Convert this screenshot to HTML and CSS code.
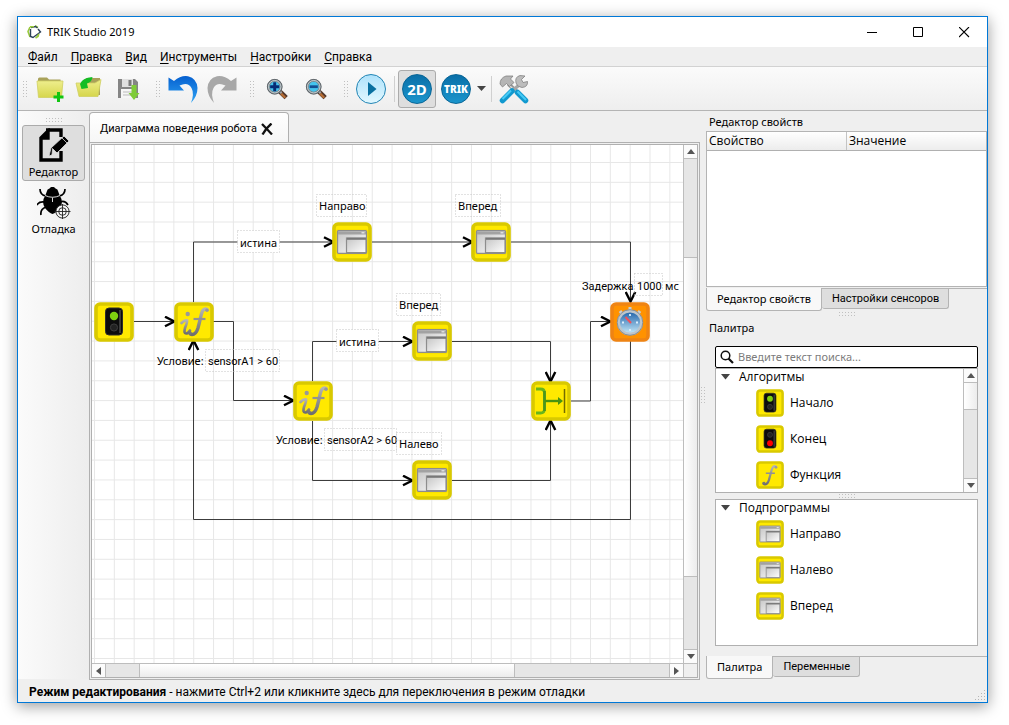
FILE: index.html
```
<!DOCTYPE html>
<html lang="ru">
<head>
<meta charset="utf-8">
<title>TRIK Studio 2019</title>
<link rel="stylesheet" href="styles.css">
</head>
<body>
<svg class="defs" width="0" height="0" aria-hidden="true">
  <defs>
    <linearGradient id="silver" x1="0" y1="0" x2="0" y2="1"><stop offset="0" stop-color="#b4b4b4"/><stop offset="1" stop-color="#6f6f6f"/></linearGradient>
    <linearGradient id="pane" x1="0" y1="0" x2="1" y2="1"><stop offset="0" stop-color="#c4c4c4"/><stop offset="1" stop-color="#ffffff"/></linearGradient>
    <linearGradient id="folder" x1="0" y1="0" x2="0" y2="1"><stop offset="0" stop-color="#eeee8c"/><stop offset="1" stop-color="#d6d64c"/></linearGradient>
    <linearGradient id="dial" x1="0" y1="0" x2="0" y2="1"><stop offset="0" stop-color="#1c5fa8"/><stop offset="1" stop-color="#c9ecfa"/></linearGradient>
    <linearGradient id="blueArrow" x1="0" y1="0" x2="0" y2="1"><stop offset="0" stop-color="#0660d0"/><stop offset="1" stop-color="#2fa4f4"/></linearGradient>
    <linearGradient id="sky" x1="0" y1="0" x2="0" y2="1"><stop offset="0" stop-color="#aee2fb"/><stop offset="1" stop-color="#e2f8ff"/></linearGradient>
    <symbol id="tile" viewBox="0 0 40 40"><rect x="2" y="2" width="36" height="36" rx="4" fill="#ffe900" stroke="#d9c900" stroke-width="3.6"/></symbol>
    <symbol id="light" viewBox="0 0 40 40"><rect x="11.500" y="6" width="17" height="27" rx="3.500" fill="#0c0c0c" stroke="#2d2d2d"/><path d="M26 8v23" stroke="#3b3b3b" stroke-width="2"/></symbol>
    <symbol id="begin" viewBox="0 0 40 40"><use href="#tile"/><use href="#light"/><circle cx="20" cy="14" r="4.200" fill="#7ed010"/><circle cx="20" cy="25.500" r="3.600" fill="#222" stroke="#3d3d3d"/></symbol>
    <symbol id="end" viewBox="0 0 40 40"><use href="#tile"/><use href="#light"/><circle cx="20" cy="14" r="3.600" fill="#222" stroke="#3d3d3d"/><circle cx="20" cy="26" r="4.200" fill="#f00"/></symbol>
    <symbol id="cond" viewBox="0 0 40 40"><use href="#tile"/><g fill="none" stroke="url(#silver)" stroke-linecap="round"><path d="M7.500 21Q10.500 18 13 18.500Q13.500 20 11 26Q9.500 31.500 12 31.500Q14 31.500 16 28.500" stroke-width="2.700"/><path d="M33 7.500Q30.500 6 28.500 9Q27.500 11 26 18L24 26Q22 32.500 18 32.500Q16.500 32.500 16 31.500" stroke-width="3.400"/></g><path d="M19.500 17H31.500" stroke="#929292" stroke-width="2.200"/><circle cx="13.700" cy="12" r="2.200" fill="#999"/><circle cx="33" cy="8.200" r="1.800" fill="#999"/><circle cx="16" cy="31" r="1.800" fill="#777"/></symbol>
    <symbol id="func" viewBox="0 0 40 40"><use href="#tile"/><path d="M29 8.500Q26.500 6 24 9Q22.500 11 21 18L18.500 27Q16.500 33.500 12.500 33.500Q11 33.500 10.500 32" fill="none" stroke="url(#silver)" stroke-linecap="round" stroke-width="3.200"/><path d="M14 17.500H27" stroke="#929292" stroke-width="2.200"/><circle cx="28.500" cy="9" r="1.900" fill="#999"/><circle cx="11.500" cy="31.500" r="1.900" fill="#777"/></symbol>
    <symbol id="sub" viewBox="0 0 40 40"><use href="#tile"/><path d="M5 8h30v24H5z" fill="none" stroke="#f3d900"/><rect x="5.500" y="8.700" width="29" height="22.600" rx="1" fill="url(#pane)" stroke="#8d8d8d" stroke-width="1.300"/><path d="M6 9.500h28v3H6z" fill="#a2a2a2"/><path d="M29.500 10.800h3" stroke="#eee" stroke-width="1.200"/><rect x="14.500" y="16" width="19.500" height="14.600" fill="url(#pane)" stroke="#8d8d8d" stroke-width="1.200"/><path d="M15 16.800h19" stroke="#787878" stroke-width="2"/></symbol>
    <symbol id="merge" viewBox="0 0 40 40"><use href="#tile"/><path d="M5 8h4.500q4 0 4 4V28q0 4-4 4H5" fill="none" stroke="#68b51c" stroke-width="2.800"/><path d="M13.500 10v20" stroke="#4d951c" stroke-width="2.600"/><path d="M14 20h14" stroke="#4a9410" stroke-width="2.400"/><path d="M27 16l5 4-5 4z" fill="#4a9410"/><path d="M33.500 8v24" stroke="#736b00" stroke-width="1.500"/></symbol>
    <symbol id="timer" viewBox="0 0 40 40"><rect x="2" y="2" width="36" height="36" rx="4" fill="#ff9200" stroke="#ef8413" stroke-width="3.600"/><path d="M20 5v5M10 9l3 4M30 9l-3 4" stroke="#c9cdd0" stroke-width="3"/><circle cx="20" cy="20.500" r="11.600" fill="url(#dial)" stroke="#bdc5cb" stroke-width="3"/><circle cx="20" cy="20.500" r="12.800" fill="none" stroke="#78838b" stroke-width=".8"/><path d="M20 12v2M20 27v2M12 20.500h2M26 20.500h2" stroke="#dceefc" stroke-width="1.800"/><path d="M15.500 15l5.500 6" stroke="#f2505a" stroke-width="2"/></symbol>
    <symbol id="zoomer" viewBox="0 0 24 24"><path d="M15 14.500l7 7" stroke="#51362a" stroke-width="5"/><path d="M16.500 17l4.500 4.500" stroke="#b66d34" stroke-width="2.500"/><path d="M14 13.500l3 3" stroke="#a4a4a4" stroke-width="2.500"/><circle cx="9.500" cy="9.500" r="7" fill="#45c5ee" stroke="#7b8388" stroke-width="3"/><circle cx="9.500" cy="9.500" r="8" fill="none" stroke="#555b5e" stroke-width=".8"/><circle cx="9.500" cy="9.500" r="6.800" fill="none" stroke="#c7d2d6"/></symbol>
    <marker id="tip" viewBox="0 0 12 12" refX="10" refY="6" markerWidth="12" markerHeight="12" markerUnits="userSpaceOnUse" orient="auto"><path d="M1 1.200L10.500 6L1 10.800" fill="none" stroke="#000" stroke-width="2.400"/></marker>
    <pattern id="grid" x="2" y="17" width="19.840" height="19.840" patternUnits="userSpaceOnUse"><path d="M0 .5H20M.5 0V20" stroke="#e7e7e7" stroke-width="1" fill="none"/></pattern>
  </defs>
</svg>

<div class="window">
  <header class="titlebar">
    <svg class="logo" width="15" height="14" viewBox="0 0 15 14" fill="none" stroke-width="1.600"><path d="M3 2L1 6.500L3 12M11 2.500L8 .8M8.500 13L11.500 11" stroke="#9acb3b"/><path d="M4 2.500L8.500 1.500L10.500 3M3.500 4v7.500l2.500 1L13.500 7L11 4" stroke="#2c4259" stroke-width="1.400"/><path d="M3 1.800H7M12 9l-1.500 2.500" stroke="#9acb3b"/></svg>
    <span class="caption">TRIK Studio 2019</span>
    <button class="winbtn" aria-label="Свернуть"><svg width="11" height="11"><path d="M0 5.500h10" stroke="#000"/></svg></button>
    <button class="winbtn" aria-label="Развернуть"><svg width="11" height="11"><path d="M.5 .5h9v9h-9z" fill="none" stroke="#000"/></svg></button>
    <button class="winbtn" aria-label="Закрыть"><svg width="11" height="11"><path d="M0 0l10 10M10 0L0 10" stroke="#000" stroke-width="1.100"/></svg></button>
  </header>

  <nav class="menubar">
    <button><u>Ф</u>айл</button><button><u>П</u>равка</button><button><u>В</u>ид</button><button><u>И</u>нструменты</button><button><u>Н</u>астройки</button><button><u>С</u>правка</button>
  </nav>

  <div class="toolbar">
    <i class="grip"></i>
    <div class="group">
      <button aria-label="Создать"><svg width="30" height="28" viewBox="0 -1 30 28"><path d="M3 3q0-1.500 1.500-1.500H12l2 2h11.500L26 9H3z" fill="#a9a25a"/><path d="M2 5h26l-1.500 16.500H3.500z" fill="url(#folder)" stroke="#cfcf62" stroke-width=".8"/><path d="M23.500 16v10M18.500 21h10" stroke="#12c512" stroke-width="3"/></svg></button>
      <button aria-label="Открыть"><svg width="30" height="28" viewBox="0 -1 30 28"><path d="M12 2h14v17H7z" fill="#aaa15a"/><path d="M2 7h19l6-3.500-3 17H5z" fill="url(#folder)" stroke="#cfcf62" stroke-width=".8"/><path d="M6 8Q8 2 18.500 1Q18 6 13 7.500L14 12L7.500 13z" fill="#14bd25"/></svg></button>
      <button aria-label="Сохранить"><svg width="30" height="28" viewBox="0 0 30 28"><path d="M5 4h17l3 3v16H5z" fill="#858585"/><path d="M9 4h11v8H9z" fill="#e0e0e0"/><path d="M15.500 5h3v6h-3z" fill="#7a7a7a"/><path d="M8 14h14v9H8z" fill="#f6f6f6"/><path d="M10 17h9M10 20h9" stroke="#bbb"/><path d="M18.500 10h5v8h3L21 25l-5.500-7h3z" fill="#7fcb38"/></svg></button>
    </div>
    <i class="grip"></i>
    <div class="group">
      <button aria-label="Отменить"><svg width="30" height="28" viewBox="0 0 30 28"><path d="M.5 2.500L6 6Q13 0 20 1.200Q29 3.500 29.500 13Q29.500 21 23 28Q26.500 18.500 23.500 13Q20 6.500 11.500 10.500L16 15.500H.5z" fill="url(#blueArrow)"/></svg></button>
      <button aria-label="Повторить"><svg width="30" height="28" viewBox="0 0 30 28"><path d="M29.500 2.500L24 6Q17 0 10 1.200Q1 3.500 .5 13Q.5 21 7 28Q3.500 18.500 6.500 13Q10 6.500 18.500 10.500L14 15.500H29.500z" fill="#a8a8a8"/></svg></button>
    </div>
    <i class="grip"></i>
    <div class="group">
      <button aria-label="Увеличить"><svg width="22" height="22" viewBox="0 0 24 24"><use href="#zoomer"/><path d="M9.500 4.500v10M4.500 9.500h10" stroke="#072c75" stroke-width="3.200"/></svg></button>
      <button aria-label="Уменьшить"><svg width="22" height="22" viewBox="0 0 24 24"><use href="#zoomer"/><path d="M5 9.500h9" stroke="#144f92" stroke-width="3"/></svg></button>
    </div>
    <i class="grip"></i>
    <div class="group">
      <button aria-label="Запустить"><svg width="30" height="30"><circle cx="15" cy="15" r="14.500" fill="url(#sky)" stroke="#2385b4"/><path d="M12 8l8.500 7L12 22z" fill="#0870a0"/></svg></button>
    </div>
    <i class="rule"></i>
    <div class="group">
      <button class="pressed"><span class="disc">2D</span></button>
      <button><span class="disc trik">TRIK</span></button>
    </div>
    <button class="more" aria-label="Выбор робота"><svg width="9" height="5"><path d="M0 0h9L4.500 5z" fill="#444"/></svg></button>
    <i class="rule"></i>
    <button aria-label="Настройки"><svg width="30" height="30" viewBox="0 0 30 30"><path d="M9.500 10L19 19" stroke="#969696" stroke-width="4"/><path d="M10 11L19 20" stroke="#dedede" stroke-width="1.300"/><path d="M1 10Q1 4 7 2H14L11.500 5L15 8.500L10.500 12.500L7.500 9.500L3.500 13z" fill="#b5b5b5" stroke="#777" stroke-width=".7"/><path d="M19 12L13 17" stroke="#a6a6a6" stroke-width="3.500"/><path d="M17 9Q15.500 3 21 1.500L26 2L22.500 5.500L24 8.500L28.500 7.500Q29 13 23 13.500Q18 13 17 9z" fill="#bcbcbc" stroke="#777" stroke-width=".7"/><path d="M13 17L3.500 26.500" stroke="#1199cf" stroke-width="5.500" stroke-linecap="round"/><path d="M12 16.500L3.500 25" stroke="#46caf5" stroke-width="2"/><path d="M18.500 18.500L26.500 26.500" stroke="#1199cf" stroke-width="5.500" stroke-linecap="round"/><path d="M18.500 17.500L27 26" stroke="#46caf5" stroke-width="2"/></svg></button>
  </div>

  <main class="work">
    <aside class="modes">
      <i class="grip flat"></i>
      <button class="mode pressed">
        <svg width="34" height="36" viewBox="3 0 34 36"><path d="M12 2H27V9M27 23V32H7V10L14 3V10H7" fill="none" stroke="#000" stroke-width="3.400"/><path d="M7 10L14 3v8H7z"/><path d="M15 28L17 20L30 8L35 13L23 25z" fill="#000" stroke="#e0e0e0" stroke-width=".8"/><path d="M27 9l6 6M18.500 20.500l4.500 4.500-5 2z" stroke="#e0e0e0" fill="#ddd" stroke-width=".8"/></svg>
        <span>Редактор</span>
      </button>
      <button class="mode">
        <svg width="34" height="34" viewBox="1 2 34 34"><g fill="none" stroke="#000" stroke-width="1.700"><path d="M10 11Q4 10 4 4M23 11Q29 10 29 4M9 17Q3 16 1 20M24 17Q29 15 32 20M10 22Q4 24 5 30"/></g><path d="M11 6Q11 4 13.500 3.500Q16.500 0 19.500 3.500Q22 4 22 6L23.500 10Q28 17 24 23Q20 28 16.500 29Q13 28 9 23Q5 17 9.500 10z"/><path d="M9 10.500Q16.500 14 24 10.500M16.500 12.500V17" fill="none" stroke="#eee" stroke-width=".9"/><circle cx="26.500" cy="26.500" r="6.600" fill="#f5f5f5" stroke="#222" stroke-width=".9"/><circle cx="26.500" cy="26.500" r="3.800" fill="none" stroke="#222" stroke-width=".9"/><path d="M18.500 26.500h16M26.500 19v15" stroke="#222" stroke-width=".9"/></svg>
        <span>Отладка</span>
      </button>
    </aside>

    <section class="editor">
      <div class="doctabs">
        <div class="doctab"><span>Диаграмма поведения робота</span><button aria-label="Закрыть вкладку"><svg width="12" height="12" viewBox="0 0 12 12"><path d="M1 1Q4 4 11 11.500M10.500 .5Q5 5 1.500 11.500" fill="none" stroke="#111" stroke-width="2.300"/></svg></button></div>
      </div>
      <div class="frame">
        <div class="scene">
          <svg class="diagram">
            <rect width="100%" height="100%" fill="url(#grid)"/>
            <g transform="translate(-92 -145)">
              <g class="links">
                <path d="M134 321.500H174"/>
                <path d="M193.500 302V242H333"/>
                <path d="M213 321.500H233.500V400.500H293"/>
                <path d="M312.500 381V341.500H412"/>
                <path d="M372 242H472"/>
                <path d="M511 242H630.500V301"/>
                <path d="M452 341.500H550.500V381"/>
                <path d="M571 401H590.500V321.500H610"/>
                <path d="M312.500 421V480.500H412"/>
                <path d="M452 480.500H550.500V421"/>
                <path d="M630.500 341V519.500H193.500V341"/>
              </g>
              <use href="#begin" x="94" y="302" width="40" height="40"/>
              <use href="#cond" x="174" y="302" width="40" height="40"/>
              <use href="#sub" x="332" y="222" width="40" height="40"/>
              <use href="#sub" x="471" y="222" width="40" height="40"/>
              <use href="#sub" x="412" y="321" width="40" height="40"/>
              <use href="#cond" x="293" y="381" width="40" height="40"/>
              <use href="#merge" x="531" y="381" width="40" height="40"/>
              <use href="#sub" x="412" y="460" width="40" height="40"/>
              <use href="#timer" x="610" y="302" width="40" height="40"/>
              <g class="boxes">
                <rect x="316.500" y="194.500" width="50" height="22"/>
                <rect x="455.500" y="194.500" width="45" height="22"/>
                <rect x="396.500" y="293.500" width="44" height="22"/>
                <rect class="solid" x="237.500" y="230.500" width="42" height="22"/>
                <rect class="solid" x="336.500" y="329.500" width="42" height="22"/>
                <rect x="205.500" y="349.500" width="74" height="22"/>
                <rect x="324.500" y="428.500" width="72" height="22"/>
                <rect x="634.500" y="273.500" width="28" height="22"/>
              </g>
              <g class="labels">
                <text x="319" y="210">Направо</text>
                <text x="458" y="210">Вперед</text>
                <text x="399" y="309">Вперед</text>
                <text x="240" y="247">истина</text>
                <text x="339" y="346">истина</text>
                <text x="157" y="365">Условие:</text><text class="value" x="208" y="365">sensorA1 &gt; 60</text>
                <text x="276" y="444">Условие:</text><text class="value" x="327" y="444">sensorA2 &gt; 60</text>
                <text class="value" x="582" y="290">Задержка</text><text class="value" x="637" y="290">1000</text><text x="665" y="290">мс</text>
              </g>
              <g class="boxes"><rect x="396.500" y="432.500" width="45" height="22"/></g>
              <g class="labels"><text x="399" y="448">Налево</text></g>
            </g>
          </svg>
        </div>
        <div class="vbar">
          <button aria-label="Вверх"><svg width="8" height="5"><path d="M0 5h8L4 0z"/></svg></button>
          <i class="gap99"></i><i class="thumb gap320"></i><i class="gap73"></i>
          <button aria-label="Вниз"><svg width="8" height="5"><path d="M0 0h8L4 5z"/></svg></button>
        </div>
        <div class="hbar">
          <button aria-label="Влево"><svg width="5" height="8"><path d="M5 0v8L0 4z"/></svg></button>
          <i class="gap33"></i><i class="thumb gap375"></i><i class="gap155"></i>
          <button aria-label="Вправо"><svg width="5" height="8"><path d="M0 0v8l5-4z"/></svg></button>
        </div>
        <i class="corner"></i>
      </div>
    </section>

    <aside class="docks">
      <i class="grip tall"></i>
      <section class="dock props">
        <h2>Редактор свойств</h2>
        <div class="sheet">
          <table>
            <thead><tr><th>Свойство</th><th>Значение</th></tr></thead>
          </table>
        </div>
        <div class="tabs"><button class="active">Редактор свойств</button><button>Настройки сенсоров</button></div>
      </section>
      <i class="grip flat"></i>
      <section class="dock palette">
        <h2>Палитра</h2>
        <div class="inner">
          <label class="search">
            <svg width="14" height="14" viewBox="0 0 14 14"><circle cx="5.500" cy="5.500" r="4.300" fill="none" stroke="#111" stroke-width="1.500"/><path d="M8.500 8.500l4.500 4.500" stroke="#111" stroke-width="2.200"/></svg>
            <input type="text" placeholder="Введите текст поиска..." aria-label="Поиск">
          </label>
          <div class="list algos">
            <div class="rows">
              <button class="head"><svg width="9" height="6"><path d="M0 0h9L4.500 5.500z"/></svg>Алгоритмы</button>
              <ul>
                <li><svg width="28" height="28"><use href="#begin"/></svg>Начало</li>
                <li><svg width="28" height="28"><use href="#end"/></svg>Конец</li>
                <li><svg width="28" height="28"><use href="#func"/></svg>Функция</li>
              </ul>
            </div>
            <div class="vbar">
              <button aria-label="Вверх"><svg width="8" height="5"><path d="M0 5h8L4 0z"/></svg></button>
              <i class="thumb gap27"></i><i class="gap71"></i>
              <button aria-label="Вниз"><svg width="8" height="5"><path d="M0 0h8L4 5z"/></svg></button>
            </div>
          </div>
          <i class="grip flat split"></i>
          <div class="list subs">
            <div class="rows">
              <button class="head"><svg width="9" height="6"><path d="M0 0h9L4.500 5.500z"/></svg>Подпрограммы</button>
              <ul>
                <li><svg width="28" height="28"><use href="#sub"/></svg>Направо</li>
                <li><svg width="28" height="28"><use href="#sub"/></svg>Налево</li>
                <li><svg width="28" height="28"><use href="#sub"/></svg>Вперед</li>
              </ul>
            </div>
          </div>
        </div>
        <div class="tabs"><button class="active">Палитра</button><button>Переменные</button></div>
      </section>
    </aside>
  </main>

  <footer class="status">
    <p><b>Режим редактирования</b> - нажмите Ctrl+2 или кликните здесь для переключения в режим отладки</p>
    <svg width="12" height="12" fill="#b5b5b5"><path d="M9 0h1v1h-1zM6 3h1v1h-1zM9 3h1v1h-1zM3 6h1v1h-1zM6 6h1v1h-1zM9 6h1v1h-1zM0 9h1v1h-1zM3 9h1v1h-1zM6 9h1v1h-1zM9 9h1v1h-1z"/></svg>
  </footer>
</div>
</body>
</html>
```
FILE: styles.css
```
* { box-sizing: border-box; }
html, body { height: 100%; }
body {
  margin: 0;
  padding: 16px 21px 22px 17px;
  background: #fff;
  color: #000;
  font: 11px/16px "Noto Sans", "Open Sans", sans-serif;
  overflow: hidden;
}
button { border: 0; padding: 0; margin: 0; background: none; font: inherit; color: inherit; }
svg { display: block; flex: none; }
i { display: block; flex: none; }
.defs { position: absolute; }

.window {
  height: 100%;
  display: flex;
  flex-direction: column;
  border: 1px solid #0078d7;
  background: #efefef;
  box-shadow: 0 3px 14px rgba(0, 0, 0, .4);
}

.titlebar { display: flex; height: 30px; background: #fff; align-items: center; flex: none; }
.logo { margin-left: 9px; }
.caption { flex: 1; margin-left: 5px; }
.winbtn { width: 46px; height: 28px; display: grid; place-items: center; }

.menubar { display: flex; height: 20px; flex: none; padding-left: 10px; gap: 13px; border-bottom: 1px solid #d2d2d2; align-items: center; font: 12px/18px Roboto, sans-serif; }
.menubar u { text-underline-offset: 2px; }

.toolbar {
  display: flex;
  align-items: center;
  flex: none;
  height: 44px;
  padding-left: 4px;
  background: linear-gradient(#fbfbfb, #eeeeee);
  border-bottom: 1px solid #b4b4b4;
}
.toolbar .grip { margin: 0 3px 0 8px; }
.toolbar .grip:first-child { margin-left: 0; }
.grip { width: 6px; height: 18px; background: radial-gradient(circle, #c0c0c0 0 1px, transparent 1px) 0 0 / 3px 3px; }
.grip.flat { width: 18px; height: 6px; }
.group { display: flex; gap: 1px; }
.toolbar button { width: 38px; height: 38px; display: grid; place-items: center; }
.toolbar .more { width: 12px; }
.toolbar .rule { width: 1px; height: 26px; margin: 0 3px 0 4px; background: #d0d0d0; }
.pressed { background: #dedede; border: 1px solid #ababab; border-radius: 3px; }
.disc {
  width: 30px; height: 30px; border-radius: 50%;
  display: grid; place-items: center;
  background: linear-gradient(#0a6fa8, #1b95cc);
  border: 1px solid #086596;
  color: #fff; font: bold 15px/28px "Noto Sans", sans-serif;
}
.disc.trik { font-size: 10px; font-weight: 900; }

.work { flex: 1; min-height: 0; display: flex; }

.modes {
  width: 71px; flex: none;
  display: flex; flex-direction: column; align-items: center;
  padding: 6px 4px 0;
  background: linear-gradient(90deg, #fbfbfb, #ededed);
}
.modes .grip { margin-bottom: 2px; }
.mode { width: 63px; height: 56px; display: flex; flex-direction: column; align-items: center; justify-content: flex-end; border-radius: 3px; }
.mode span { line-height: 16px; }

.editor { flex: 1; min-width: 0; display: flex; flex-direction: column; padding-top: 1px; }
.doctabs { height: 31px; flex: none; display: flex; }
.doctab {
  width: 200px;
  display: flex; align-items: center; gap: 4px;
  padding: 2px 0 0 10px;
  border: 1px solid #b0b0b0; border-bottom: 0;
  border-radius: 4px 4px 0 0;
  background: linear-gradient(#fff, #f6f6f6);
  font-family: Roboto, sans-serif;
}
.doctab span { white-space: nowrap; }
.frame {
  flex: 1; min-height: 0;
  display: grid;
  grid-template: minmax(0, 1fr) 14px / minmax(0, 1fr) 14px;
  margin: 1px 2px;
  border: 1px solid #b0b0b0;
  outline: 1px solid #b0b0b0;
  outline-offset: 1px;
}
.scene { background: #fff; overflow: hidden; }
.diagram { width: 100%; height: 100%; }
.links path { fill: none; stroke: #3c3c3c; stroke-width: 1; marker-end: url(#tip); }
.boxes rect { fill: none; stroke: #c4c4c4; stroke-dasharray: 1 2; }
.boxes .solid { fill: #fff; }
.labels { font: 11px "Noto Sans", sans-serif; }
.labels .value { font-family: Roboto, sans-serif; }

.vbar, .hbar { display: flex; background: #e6e6e6; min-height: 0; }
.vbar { flex-direction: column; border-left: 1px solid #bdbdbd; width: 14px; flex: none; }
.hbar { border-top: 1px solid #bdbdbd; min-width: 0; }
.vbar button, .hbar button { flex: none; display: grid; place-items: center; background: #fbfbfb; fill: #555; }
.vbar button { height: 14px; border-bottom: 1px solid #bdbdbd; }
.vbar button:last-child { border-bottom: 0; border-top: 1px solid #bdbdbd; }
.hbar button { width: 14px; border-right: 1px solid #bdbdbd; }
.hbar button:last-child { border-right: 0; border-left: 1px solid #bdbdbd; }
.vbar .thumb { background: linear-gradient(90deg, #fff, #ececec); border: solid #bdbdbd; border-width: 1px 0; }
.hbar .thumb { background: linear-gradient(#fff, #ececec); border: solid #bdbdbd; border-width: 0 1px; }
.corner { border: solid #bdbdbd; border-width: 1px 0 0 1px; }
.gap99 { flex: 99 1 0; }
.gap320 { flex: 320 1 0; }
.gap73 { flex: 73 1 0; }
.gap33 { flex: 33 1 0; }
.gap375 { flex: 375 1 0; }
.gap155 { flex: 155 1 0; }
.gap27 { flex: 27 1 0; }
.gap71 { flex: 71 1 0; }
.vbar .gap27 { border-top: 0; }

.docks {
  width: 287px; flex: none; min-height: 0;
  display: grid;
  grid-template: 200px 7px minmax(0, 1fr) / 6px minmax(0, 1fr);
}
.docks > .tall { grid-row: 1 / 4; align-self: center; }
.docks > .flat { grid-column: 2; justify-self: center; }
.dock { grid-column: 2; display: flex; flex-direction: column; min-height: 0; }
.dock h2 { margin: 0; padding: 3px 3px 1px; font: inherit; }
.sheet { flex: 1; min-height: 0; border: 1px solid #b4b4b4; background: #fff; }
.sheet table { width: 100%; border-collapse: collapse; table-layout: fixed; }
.sheet th {
  height: 18px; padding: 0 2px;
  text-align: left; font: 12px/18px "Open Sans", sans-serif;
  background: linear-gradient(#fff, #ececec);
  border-bottom: 1px solid #b0b0b0;
}
.sheet th + th { border-left: 1px solid #c4c4c4; }
.tabs { flex: none; display: flex; align-items: flex-start; height: 23px; margin-top: 1px; border-top: 1px solid #b4b4b4; }
.tabs button { height: 20px; padding: 0 9px 0 10px; background: #dedede; border: 1px solid #b4b4b4; border-top: 0; border-left: 0; border-radius: 0 0 3px 3px; font-family: Roboto, sans-serif; }
.tabs .active { height: 23px; margin-top: -1px; padding: 0 10px; border-left: 1px solid #b4b4b4; background: #f8f8f8; font-family: inherit; }

.palette h2 { padding: 2px 3px 0; }
.inner { flex: 1; min-height: 0; display: flex; flex-direction: column; padding: 10px 9px 9px; }
.search { display: flex; align-items: center; flex: none; gap: 4px; height: 22px; padding: 0 4px; background: #fff; border: 1px solid #000; border-radius: 2px; }
.search input { flex: 1; min-width: 0; border: 0; outline: 0; padding: 0; background: none; font: inherit; }
.search input::placeholder { color: #7c7c7c; }
.list { display: flex; min-height: 0; border: 1px solid #b0b0b0; background: #fff; }
.algos { flex: 126 1 0; }
.subs { flex: 148 1 0; }
.split { align-self: center; height: 4px; }
.rows { flex: 1; min-width: 0; overflow: hidden; font: 12px/16px "Open Sans", sans-serif; }
.head { display: flex; align-items: center; gap: 9px; padding-left: 5px; height: 16px; fill: #444; }
.rows ul { list-style: none; margin: 0; padding: 0 0 0 40px; }
.rows li { display: flex; align-items: center; gap: 6px; height: 36px; }

.status { flex: none; height: 23px; display: flex; justify-content: space-between; align-items: center; padding-left: 11px; }
.status p { margin: 0; padding-top: 2px; white-space: nowrap; font: 12px/18px Roboto, sans-serif; }
.status svg { align-self: flex-end; }
```
